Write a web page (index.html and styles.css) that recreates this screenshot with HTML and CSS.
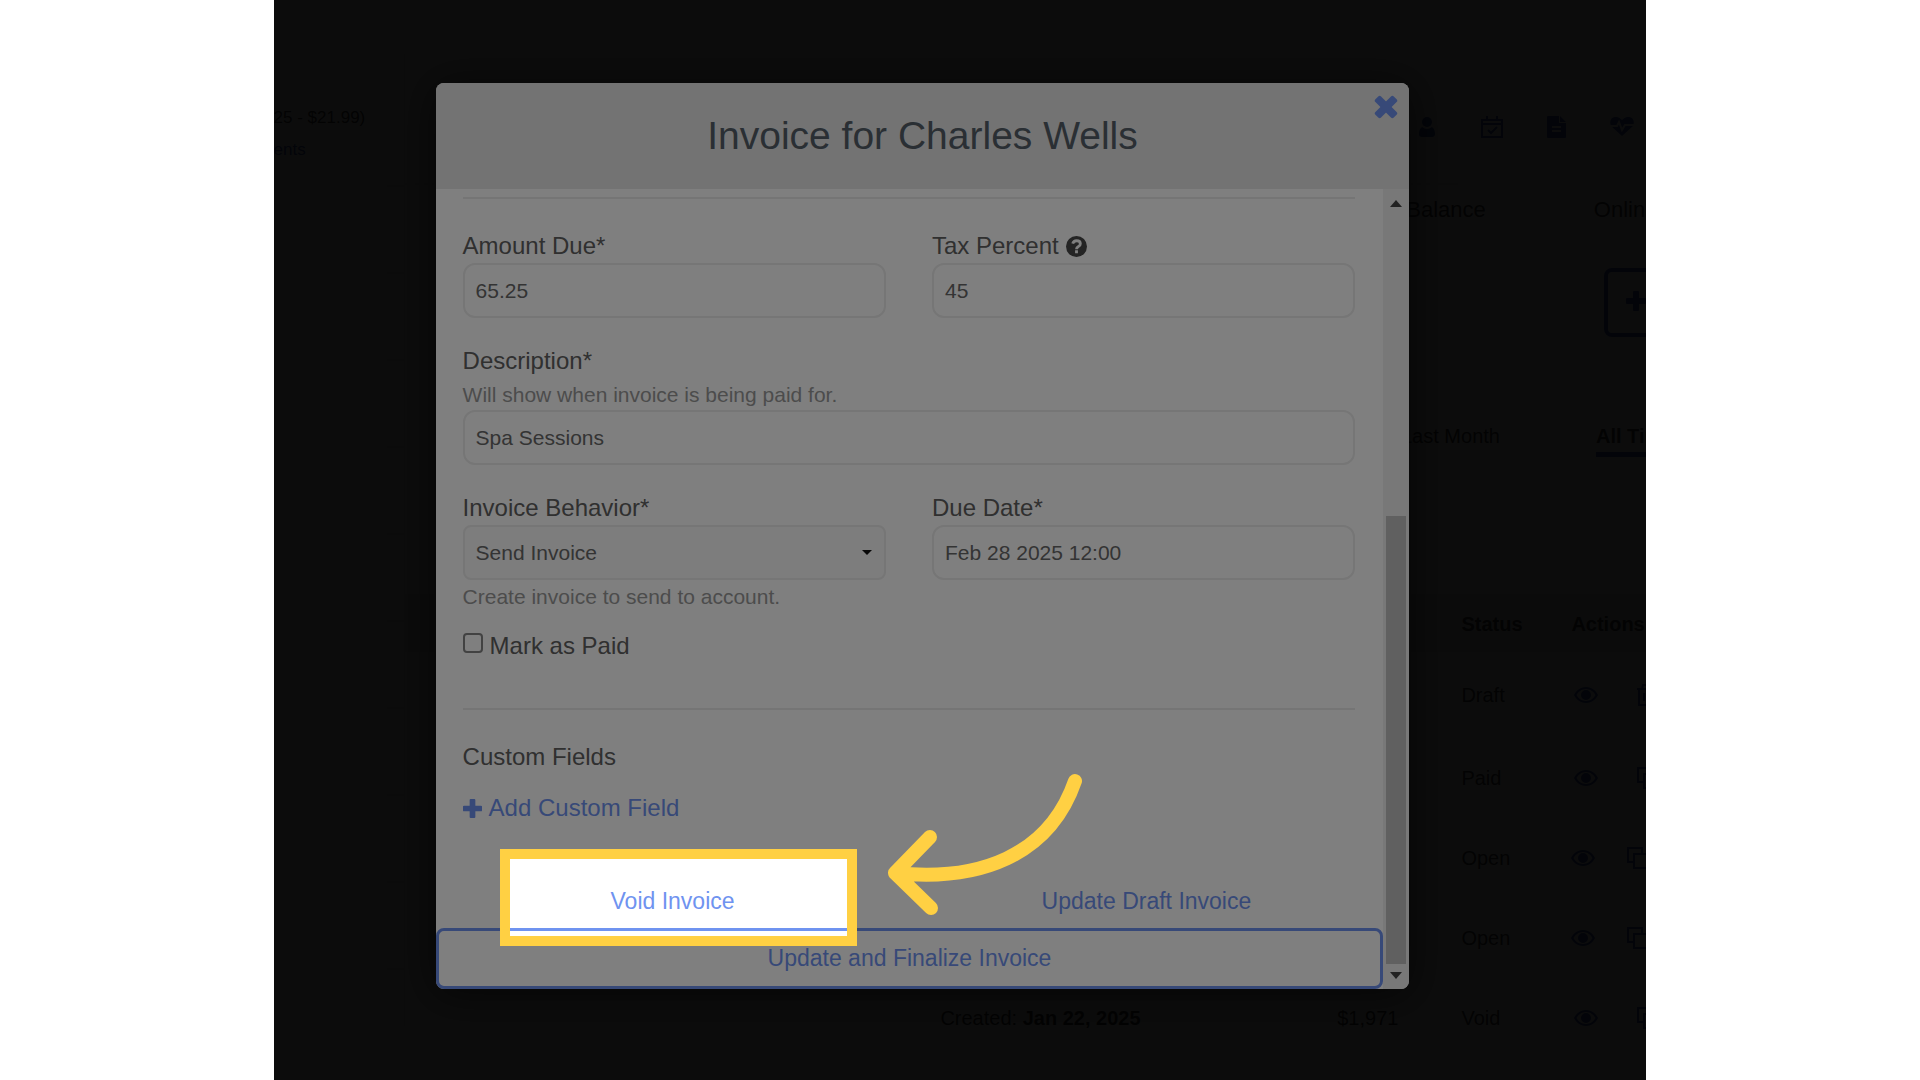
FILE: index.html
```html
<!DOCTYPE html>
<html lang="en">
<head>
  <meta charset="UTF-8">
  <meta name="viewport" content="width=device-width, initial-scale=1">
  <title>Invoice for Charles Wells</title>
  <link rel="stylesheet" href="styles.css">
</head>
<body>
  <!-- Shared icons -->
  <svg class="sprite" aria-hidden="true">
    <symbol id="eye" viewBox="0 0 24 18">
      <path fill-rule="evenodd" d="M12 1C6 1 2 5 0 9c2 4 6 8 12 8s10-4 12-8c-2-4-6-8-12-8zm0 14C7.500 15 4 12 2.500 9 4 6 7.500 3 12 3s8 3 9.500 6c-1.500 3-5 6-9.500 6zM12 4a5 5 0 1 0 0 10 5 5 0 0 0 0-10z"/>
    </symbol>
    <symbol id="copy" viewBox="0 0 24 24">
      <path fill="none" stroke="currentColor" stroke-width="2" d="M8 8h14v14H8zM8 16H2V2h14v6"/>
    </symbol>
    <symbol id="trash" viewBox="0 0 20 22">
      <path fill="none" stroke="currentColor" stroke-width="2" d="M1 5h18M6 5l1-4h6l1 4M3 5v16h14V5M8 9v8M12 9v8"/>
    </symbol>
    <symbol id="plus" viewBox="0 0 20 20">
      <path d="M8 0h4a1 1 0 0 1 1 1v6h6a1 1 0 0 1 1 1v4a1 1 0 0 1-1 1h-6v6a1 1 0 0 1-1 1H8a1 1 0 0 1-1-1v-6H1a1 1 0 0 1-1-1V8a1 1 0 0 1 1-1h6V1a1 1 0 0 1 1-1z"/>
    </symbol>
  </svg>

  <div class="stage">
    <!-- Account page behind the modal -->
    <div class="page">
      <aside class="sidebar">
        <div class="side-head">
          <p>25 - $21.99)</p>
          <a href="#">ents</a>
        </div>
        <div class="side-row"></div>
        <div class="side-row"></div>
        <div class="side-row"></div>
        <div class="side-row"></div>
        <div class="side-row"></div>
        <div class="side-row"></div>
        <div class="side-row"></div>
        <div class="side-row"></div>
        <div class="side-row"></div>
        <div class="side-row"></div>
      </aside>
      <div class="main">
        <nav class="toolbar">
          <a href="#" aria-label="Profile"><svg width="16" height="20" viewBox="0 0 16 20"><circle cx="8" cy="5" r="5"/><path d="M3 10q5 4 10 0 3 2 3 7 0 3-3 3H3q-3 0-3-3 0-5 3-7z"/></svg></a>
          <a href="#" aria-label="Calendar"><svg width="22" height="22" viewBox="0 0 22 22"><path fill="none" stroke="currentColor" stroke-width="2" d="M1 4h20v17H1zM1 8h20M6 0v5M16 0v5M7 14l3 3 6-6"/></svg></a>
          <a href="#" aria-label="Invoices"><svg width="20" height="22" viewBox="0 0 20 22"><path fill-rule="evenodd" d="M1 0h11v7h7v14q0 1-1 1H1q-1 0-1-1V1q0-1 1-1zm12 0l6 6h-6zM5 10v2h9v-2zm0 4v2h9v-2z"/></svg></a>
          <a href="#" aria-label="Health"><svg width="24" height="20" viewBox="0 0 24 20"><path d="M12 19L1 9q-2-5 1-8 5-3 10 2 5-5 10-2 3 3 1 8z"/><path fill="none" stroke="#fff" stroke-width="2" d="M0 9h7l2-4 3 8 3-5h9"/></svg></a>
        </nav>
        <nav class="tabs">
          <a href="#">Balance</a>
          <a href="#">Online</a>
        </nav>
        <div class="page-actions">
          <button class="add-btn" aria-label="Add"><svg width="20" height="20"><use href="#plus"/></svg></button>
        </div>
        <nav class="periods">
          <a href="#">Last Month</a>
          <a href="#" class="current">All Time</a>
        </nav>
        <table class="invoices">
          <colgroup>
            <col>
            <col class="col-created">
            <col class="col-amount">
            <col class="col-status">
            <col class="col-actions">
          </colgroup>
          <thead>
            <tr><th></th><th></th><th></th><th>Status</th><th>Actions</th></tr>
          </thead>
          <tbody>
            <tr class="first"><td></td><td></td><td></td><td>Draft</td><td><div class="acts"><svg width="24" height="18"><use href="#eye"/></svg><svg width="20" height="22"><use href="#trash"/></svg></div></td></tr>
            <tr><td></td><td></td><td></td><td>Paid</td><td><div class="acts"><svg width="24" height="18"><use href="#eye"/></svg><svg width="24" height="24"><use href="#copy"/></svg></div></td></tr>
            <tr><td></td><td></td><td></td><td>Open</td><td><div class="acts tight"><svg width="24" height="18"><use href="#eye"/></svg><svg width="24" height="24"><use href="#copy"/></svg></div></td></tr>
            <tr><td></td><td></td><td></td><td>Open</td><td><div class="acts tight"><svg width="24" height="18"><use href="#eye"/></svg><svg width="24" height="24"><use href="#copy"/></svg></div></td></tr>
            <tr><td></td><td>Created: <b>Jan 22, 2025</b></td><td class="amount">$1,971</td><td>Void</td><td><div class="acts"><svg width="24" height="18"><use href="#eye"/></svg><svg width="24" height="24"><use href="#copy"/></svg></div></td></tr>
          </tbody>
        </table>
      </div>
    </div>

    <!-- Invoice modal -->
    <div class="backdrop">
      <form class="modal">
        <header class="modal-header">
          <h1>Invoice for Charles Wells</h1>
          <button type="button" class="close" aria-label="Close">
            <svg width="24" height="24" viewBox="0 0 24 24"><g transform="rotate(45 12 12)"><rect x="-1" y="8" width="26" height="8" rx="2"/><rect x="8" y="-1" width="8" height="26" rx="2"/></g></svg>
          </button>
        </header>
        <div class="modal-body">
          <div class="content">
            <div class="fields">
              <hr>
              <div class="row">
                <div class="field">
                  <label for="amount">Amount Due*</label>
                  <input type="text" id="amount" value="65.25">
                </div>
                <div class="field">
                  <label for="tax">Tax Percent
                    <svg class="help" width="21" height="21" viewBox="0 0 22 22"><circle cx="11" cy="11" r="11"/><path fill="none" stroke="#fff" stroke-width="3" d="M7 8q1-3 4-3 4 0 4 3 0 2-2 3-2 1-2 3M11 15v3"/></svg>
                  </label>
                  <input type="text" id="tax" value="45">
                </div>
              </div>
              <div class="field">
                <label for="description">Description*</label>
                <p class="hint above">Will show when invoice is being paid for.</p>
                <input type="text" id="description" value="Spa Sessions">
              </div>
              <div class="row">
                <div class="field">
                  <label for="behavior">Invoice Behavior*</label>
                  <div class="select">
                    <select id="behavior"><option>Send Invoice</option></select>
                  </div>
                  <p class="hint below">Create invoice to send to account.</p>
                </div>
                <div class="field">
                  <label for="due">Due Date*</label>
                  <input type="text" id="due" value="Feb 28 2025 12:00">
                </div>
              </div>
              <div class="check">
                <input type="checkbox" id="paid">
                <label for="paid">Mark as Paid</label>
              </div>
              <hr>
              <h2>Custom Fields</h2>
              <a href="#" class="add-field"><svg width="19" height="19"><use href="#plus"/></svg>Add Custom Field</a>
            </div>
            <div class="buttons">
              <div class="void-cell">
                <button type="button">Void Invoice</button>
                <div class="spotlight"></div>
                <svg class="arrow" width="204" height="148" viewBox="0 0 204 148">
                  <path d="M11 103C95 112 165 86 191 11M46 67L11 103l36 35"/>
                </svg>
              </div>
              <button type="button">Update Draft Invoice</button>
              <button type="button" class="finalize">Update and Finalize Invoice</button>
            </div>
          </div>
          <div class="scrollbar">
            <svg width="12" height="7"><path d="M0 7l6-7 6 7z"/></svg>
            <div class="thumb"></div>
            <svg width="12" height="7"><path d="M0 0l6 7 6-7z"/></svg>
          </div>
        </div>
      </form>
    </div>
  </div>
</body>
</html>
```
FILE: styles.css
```css
* {
  box-sizing: border-box;
}
body {
  margin: 0;
  background: #fff;
  color: #444;
  font-family: "Liberation Sans", Arial, sans-serif;
}
a {
  color: #6f93f0;
  text-decoration: none;
}
p, h1, h2 {
  margin: 0;
  font-weight: normal;
}
svg {
  fill: currentColor;
  flex-shrink: 0;
}
button {
  background: none;
  border: none;
  padding: 0;
  font-family: inherit;
  color: #6f93f0;
  cursor: pointer;
}
.sprite {
  display: none;
}
.stage {
  position: relative;
  width: 71.5%;
  min-height: 100vh;
  margin: 0 auto;
  overflow: hidden;
}

/* Page under the backdrop */
.page {
  position: absolute;
  inset: 0;
  display: flex;
  background: #fff;
  font-size: 20px;
}
.page a, .page svg, .add-btn {
  color: #3c5cb8;
}
.sidebar {
  width: 131px;
  flex-shrink: 0;
  border-right: 1px solid #eee;
}
.side-head {
  height: 185px;
  padding-top: 108px;
  font-size: 17px;
  line-height: 20px;
  white-space: nowrap;
}
.side-head p {
  margin-bottom: 12px;
}
.side-row {
  height: 87px;
  border-top: 2px solid #eee;
}
.main {
  flex: 1;
  min-width: 0;
  margin-right: -41px;
}
.toolbar {
  display: flex;
  justify-content: flex-end;
  height: 183px;
  padding: 88px 34px 17px 0;
}
.toolbar a {
  display: flex;
  align-items: center;
  justify-content: center;
  width: 65px;
  border-left: 2px solid #eee;
}
.tabs {
  display: flex;
  justify-content: flex-end;
  height: 53px;
  border-top: 2px solid #eee;
}
.tabs a {
  padding: 12px 30px;
  border-left: 2px solid #eee;
  font-size: 22px;
  line-height: 25px;
}
.tabs a:first-child {
  padding-right: 76px;
  border: none;
}
.page .tabs a, .page .periods a {
  color: #444;
}
.page-actions {
  display: flex;
  justify-content: flex-end;
  padding-top: 32px;
}
.add-btn {
  width: 83px;
  height: 69px;
  padding: 0 18px;
  border: 4px solid;
  border-radius: 8px;
  text-align: left;
}
.periods {
  display: flex;
  justify-content: flex-end;
  gap: 96px;
  padding: 87px 14px 0 0;
  line-height: 24px;
}
.periods a {
  padding: 0 0 4px;
}
.periods .current {
  font-weight: bold;
  border-bottom: 5px solid #3c5cb8;
}
.invoices {
  width: 100%;
  margin-top: 137px;
  border-collapse: collapse;
  table-layout: fixed;
}
.col-created {
  width: 300px;
}
.col-amount {
  width: 221px;
}
.col-status {
  width: 110px;
}
.col-actions {
  width: 116px;
}
.invoices th {
  height: 58px;
  padding: 2px 0 0;
  background: #e8e8e8;
  text-align: left;
}
.invoices td {
  height: 80px;
  padding: 0;
}
.invoices .first td {
  height: 86px;
}
.invoices .amount {
  padding-right: 63px;
  text-align: right;
}
.acts {
  display: flex;
  align-items: center;
  gap: 38px;
  padding-left: 3px;
}
.acts.tight {
  gap: 31px;
  padding-left: 0;
}

/* Modal */
.backdrop {
  position: relative;
  display: flex;
  align-items: flex-start;
  min-height: 100vh;
  padding: 83px 237px 0 162px;
  background: rgba(0, 0, 0, 0.9);
}
.modal {
  flex: 1;
  min-width: 0;
  background: #fff;
  border-radius: 8px;
  box-shadow: 0 4px 40px rgba(0, 0, 0, 0.6);
}
.modal-header {
  position: relative;
  height: 106px;
  background: #e6e6e6;
  border-radius: 8px 8px 0 0;
  text-align: center;
}
.modal-header h1 {
  font-size: 39px;
  line-height: 106px;
  color: #545e68;
}
.close {
  position: absolute;
  top: 12px;
  right: 11px;
  width: 24px;
  height: 24px;
}
.modal-body {
  display: flex;
}
.content {
  flex: 1;
  min-width: 0;
}
.fields {
  padding: 8px 28px 0 27px;
}
hr {
  height: 2px;
  margin: 0 0 34px;
  border: none;
  background: #eaeaea;
}
.row {
  display: grid;
  grid-template-columns: 1fr 1fr;
  gap: 46px;
}
.field {
  margin-bottom: 30px;
}
.fields label, .fields h2, .add-field {
  display: flex;
  align-items: center;
  gap: 7px;
  font-size: 24px;
  line-height: 26px;
  color: #606060;
}
.field label {
  margin-bottom: 4px;
}
.help {
  color: #484848;
}
input[type="text"], select {
  display: block;
  width: 100%;
  height: 55px;
  padding: 0 11px;
  border: 2px solid #ececec;
  border-radius: 12px;
  background: #fff;
  color: #686868;
  font-family: inherit;
  font-size: 21px;
}
.select {
  position: relative;
}
select {
  appearance: none;
  border-radius: 8px;
  background: #fafafa;
}
.select::after {
  content: "";
  position: absolute;
  top: 25px;
  right: 14px;
  border: 5px solid transparent;
  border-top: 5px solid #111;
  border-bottom: none;
}
.hint {
  font-size: 21px;
  line-height: 26px;
  color: #999;
}
.hint.above {
  margin: 8px 0 2px;
}
.hint.below {
  margin-top: 4px;
}
.row:has(.hint) .field {
  margin-bottom: 23px;
}
.check {
  display: flex;
  gap: 7px;
  margin-bottom: 49px;
}
.check input {
  appearance: none;
  width: 20px;
  height: 20px;
  margin: 0;
  border: 2px solid #848484;
  border-radius: 4px;
}
.fields h2 {
  margin-bottom: 25px;
}
.fields .add-field {
  color: #6f93f0;
}
.buttons {
  display: grid;
  grid-template-columns: 1fr 1fr;
  margin-top: 54px;
}
.buttons button {
  width: 100%;
  height: 53px;
  font-size: 23px;
}
.buttons .finalize {
  grid-column: span 2;
  height: 61px;
  border: 3px solid #6f93f0;
  border-radius: 8px;
}
.scrollbar {
  display: flex;
  flex-direction: column;
  align-items: center;
  width: 26px;
  padding: 11px 0 10px;
  background: #f1f1f1;
  border-bottom-right-radius: 8px;
  color: #444;
}
.thumb {
  flex: 1;
  width: 20px;
  margin: 309px 0 8px;
  background: #c1c1c1;
}

/* Yellow frame: its huge shadow dims everything outside it */
.void-cell {
  position: relative;
}
.spotlight {
  position: absolute;
  inset: -26px 52px -18px 64px;
  border: 10px solid #ffd043;
  box-shadow: 0 0 0 2000px rgba(0, 0, 0, 0.5);
  pointer-events: none;
}
.arrow {
  position: absolute;
  top: -105px;
  left: 448px;
  pointer-events: none;
}
.arrow path {
  fill: none;
  stroke: #ffd043;
  stroke-width: 14px;
  stroke-linecap: round;
  stroke-linejoin: round;
}
```
